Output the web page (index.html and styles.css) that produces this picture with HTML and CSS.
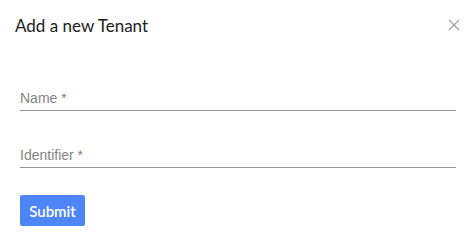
FILE: index.html
```html
<!DOCTYPE html>
<html>
<head>
<meta charset="utf-8">
<link rel="stylesheet" href="styles.css">
</head>
<body>
<div class="dialog">
  <div class="header">
    <h2 class="title">Add a new Tenant</h2>
    <button class="close" aria-label="Close">
      <svg width="12" height="12" viewBox="0 0 12 12"><path d="M1 1L11 11M11 1L1 11" stroke="#9e9e9e" stroke-width="1.1" fill="none"/></svg>
    </button>
  </div>
  <form class="form">
    <label class="field"><input class="input" placeholder="Name *"></label>
    <label class="field"><input class="input" placeholder="Identifier *"></label>
    <div class="actions"><button type="button" class="submit">Submit</button></div>
  </form>
</div>
</body>
</html>
```
FILE: styles.css
```css
* { box-sizing: border-box; }
html, body { margin: 0; padding: 0; background: #fff; }
.dialog { width: 475px; height: 245px; }
.header {
  display: flex;
  justify-content: space-between;
  align-items: flex-start;
  padding: 14px 15px 0 15px;
}
.title {
  margin: 0;
  font-family: Lato, "Open Sans", sans-serif;
  font-weight: 400;
  font-size: 17px;
  line-height: 24px;
  color: #212121;
}
.close {
  border: 0;
  background: none;
  padding: 0;
  margin: 5px 0 0 0;
  width: 12px;
  height: 12px;
  display: flex;
  cursor: pointer;
}
.form {
  display: flex;
  flex-direction: column;
  padding: 0 19px 0 20px;
  margin-top: 40px;
}
.field { display: block; margin-bottom: 24px; }
.input {
  display: block;
  width: 100%;
  border: 0;
  border-bottom: 1px solid #949494;
  padding: 12px 0 4px 0;
  height: 33px;
  line-height: 16px;
  font-family: "Liberation Sans", Arial, sans-serif;
  font-size: 14px;
  color: #333;
  outline: none;
  background: transparent;
}
.input::placeholder { color: #858585; opacity: 1; font-family: "Liberation Sans", Arial, sans-serif; }
.actions { display: flex; margin-top: 3px; }
.submit {
  width: 65px;
  height: 31px;
  border: 0;
  border-radius: 2px;
  background: #4f86f7;
  color: #fff;
  font-family: Lato, sans-serif;
  font-size: 15px;
  font-weight: 600;
  padding: 0;
}
```
